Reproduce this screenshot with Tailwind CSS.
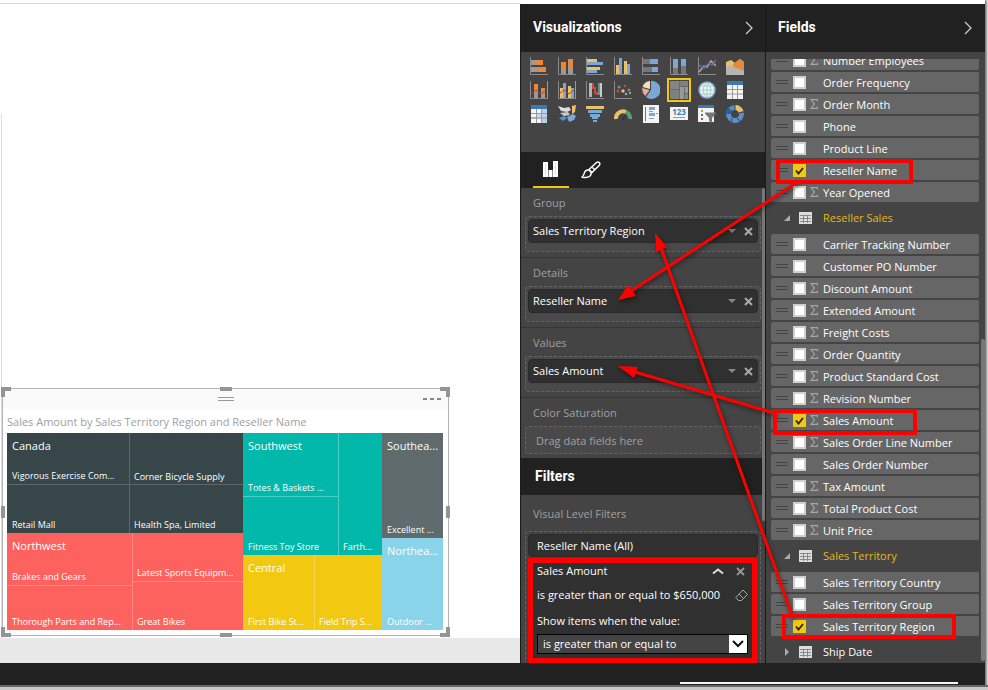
<!DOCTYPE html>
<html lang="en">
<head>
    <meta charset="UTF-8">
    <meta name="viewport" content="width=device-width, initial-scale=1.0">
    <title>Sales Report</title>
    <script src="https://cdn.jsdelivr.net/npm/@tailwindcss/browser@4"></script>
</head>
<body class="bg-white min-h-screen flex flex-col font-['Open_Sans','Noto_Sans',sans-serif] font-medium text-[11px] overflow-hidden">
    <div class="flex-1 flex flex-col mr-[3px] border-t-4 border-white shadow-[1px_1px_2px_1px_#777]">
        <main class="flex flex-1">
            <!-- Report canvas -->
            <section class="flex-1 min-w-0 flex flex-col border-t border-[#d8d8d8] bg-white -mt-px">
                <div class="flex-1 mt-[110px] border-l border-[#ddd] ml-px flex flex-col justify-end pb-[2px]">
                    <div class="relative w-[447px] border border-[#b4b4b4]">
                        <div class="h-5 bg-[#fafafa] flex items-center justify-center">
                            <span class="w-4 h-1 border-y border-[#999]"></span>
                            <button class="absolute right-[7px] top-2 flex gap-[3px] py-px" aria-label="More options">
                                <span class="w-1 h-[2px] bg-[#888]"></span><span class="w-1 h-[2px] bg-[#888]"></span><span class="w-1 h-[2px] bg-[#888]"></span>
                            </button>
                        </div>
                        <h2 class="h-6 px-1 leading-6 pt-px text-[#a0a0a0]">Sales Amount by Sales Territory Region and Reseller Name</h2>
                        <div class="ml-1 mr-[5px] mb-[5px] h-[197px] grid grid-cols-[236fr_139fr_61fr] text-white text-[9px] leading-[14px]">
                            <div class="grid grid-rows-[100fr_97fr] min-w-0">
                                <div class="grid grid-cols-[123fr_113fr] bg-[#374649]">
                                    <div class="grid grid-rows-[52fr_48fr] border-r border-[#5d686a] min-w-0">
                                        <div class="flex flex-col justify-between px-[5px] pt-[3px] pb-px border-b border-[#5d686a]"><h3 class="text-[11px] leading-5 truncate">Canada</h3><p class="truncate">Vigorous Exercise Com...</p></div>
                                        <div class="flex flex-col justify-end px-[5px] py-px"><p class="truncate">Retail Mall</p></div>
                                    </div>
                                    <div class="grid grid-rows-[52fr_48fr] min-w-0">
                                        <div class="flex flex-col justify-end px-1 border-b border-[#5d686a]"><p class="truncate">Corner Bicycle Supply</p></div>
                                        <div class="flex flex-col justify-end px-1 py-px"><p class="truncate">Health Spa, Limited</p></div>
                                    </div>
                                </div>
                                <div class="grid grid-cols-[126fr_110fr] bg-[#fd625e]">
                                    <div class="grid grid-rows-[53fr_44fr] border-r border-[#ff8683] min-w-0">
                                        <div class="flex flex-col justify-between px-[5px] pt-[3px] pb-px border-b border-[#ff8683]"><h3 class="text-[11px] leading-5 truncate">Northwest</h3><p class="truncate">Brakes and Gears</p></div>
                                        <div class="flex flex-col justify-end px-[5px] py-px"><p class="truncate">Thorough Parts and Rep...</p></div>
                                    </div>
                                    <div class="grid grid-rows-[49fr_48fr] min-w-0">
                                        <div class="flex flex-col justify-end px-1 py-px border-b border-[#ff8683]"><p class="truncate">Latest Sports Equipm...</p></div>
                                        <div class="flex flex-col justify-end px-1 py-px"><p class="truncate">Great Bikes</p></div>
                                    </div>
                                </div>
                            </div>
                            <div class="grid grid-rows-[122fr_75fr] min-w-0">
                                <div class="grid grid-cols-[96fr_43fr] bg-[#01b8aa]">
                                    <div class="grid grid-rows-[64fr_58fr] border-r border-[#4dcdc4] min-w-0">
                                        <div class="flex flex-col justify-between px-[5px] pt-[3px] pb-px border-b border-[#4dcdc4]"><h3 class="text-[11px] leading-5 truncate">Southwest</h3><p class="truncate">Totes &amp; Baskets ...</p></div>
                                        <div class="flex flex-col justify-end px-[5px] py-px"><p class="truncate">Fitness Toy Store</p></div>
                                    </div>
                                    <div class="flex flex-col justify-end px-1 py-px min-w-0"><p class="truncate">Farth...</p></div>
                                </div>
                                <div class="grid grid-cols-[72fr_67fr] bg-[#f2c811]">
                                    <div class="flex flex-col justify-between px-[5px] pt-[3px] pb-px border-r border-[#f5d550] min-w-0"><h3 class="text-[11px] leading-5 truncate">Central</h3><p class="whitespace-nowrap">First Bike St...</p></div>
                                    <div class="flex flex-col justify-end px-1 py-px min-w-0"><p class="whitespace-nowrap">Field Trip S...</p></div>
                                </div>
                            </div>
                            <div class="grid grid-rows-[105fr_92fr] min-w-0">
                                <div class="flex flex-col justify-between px-[5px] pt-[3px] pb-px bg-[#5f6b6d] min-w-0"><h3 class="text-[11px] leading-5 whitespace-nowrap">Southea...</h3><p class="whitespace-nowrap">Excellent ...</p></div>
                                <div class="flex flex-col justify-between px-[5px] pt-[3px] pb-px bg-[#8ad4eb] min-w-0"><h3 class="text-[11px] leading-5 whitespace-nowrap">Northea...</h3><p class="whitespace-nowrap">Outdoor ...</p></div>
                            </div>
                        </div>
                        <!-- Resize handles -->
                        <span class="absolute -left-[2px] -top-[2px] size-[10px] border-l-4 border-t-4 border-[#949494]"></span>
                        <span class="absolute -right-[2px] -top-[2px] size-[10px] border-r-4 border-t-4 border-[#949494]"></span>
                        <span class="absolute -left-[2px] -bottom-[2px] size-[10px] border-l-4 border-b-4 border-[#949494]"></span>
                        <span class="absolute -right-[2px] -bottom-[2px] size-[10px] border-r-4 border-b-4 border-[#949494]"></span>
                        <span class="absolute left-1/2 -ml-[6px] -top-[2px] w-3 h-1 bg-[#949494]"></span>
                        <span class="absolute left-1/2 -ml-[6px] -bottom-[2px] w-3 h-1 bg-[#949494]"></span>
                        <span class="absolute top-1/2 -mt-[6px] -left-[2px] w-1 h-3 bg-[#949494]"></span>
                        <span class="absolute top-1/2 -mt-[6px] -right-[2px] w-1 h-3 bg-[#949494]"></span>
                    </div>
                </div>
                <div class="h-[25px] bg-[#e8e8e8]"></div>
            </section>

            <div class="relative flex text-white">
                <!-- Visualizations -->
                <section class="relative w-[245px] bg-[#444] border-l border-[#1a1a1a]">
                    <header class="h-12 bg-[#212121] flex items-center justify-between pl-3 pr-[11px]">
                        <h2 class="font-['Roboto','Open_Sans',sans-serif] font-bold text-sm leading-5 pb-[2px]">Visualizations</h2>
                        <button aria-label="Collapse Visualizations"><svg class="w-[10px] h-[14px]" viewBox="0 0 10 14" fill="none" stroke="#ccc" stroke-width="1.3"><path d="M2 1l6 6-6 6"/></svg></button>
                    </header>
                    <div id="visuals" class="h-[100px] px-1 pt-[2px] grid grid-cols-[repeat(8,28px)] auto-rows-[24px] content-start"></div>
                    <nav class="h-9 bg-[#212121] flex pl-3 gap-1">
                        <button class="w-9 flex items-center justify-center border-b-2 border-[#f2c811]" aria-label="Fields"><svg class="size-4" viewBox="0 0 16 16" fill="#fff"><path d="M0 1h5v15H0zM5.500 9h4v7h-4zM10 0h5v16h-5z"/><path d="M2.500 3v11M12.500 2v12" stroke="#ddd"/></svg></button>
                        <button class="w-9 flex items-center justify-center" aria-label="Format"><svg class="w-5 h-[18px]" viewBox="0 0 20 18" fill="none" stroke="#fff" stroke-width="1.5" stroke-linejoin="round"><path d="M8 8.500L15.500 1.500q1.500-1 2.700 0t.2 2.700L11 11.500zM7.500 9q-3-.3-4 2.500-.5 3-2.500 4.500 5 1.500 8-1 2-2 .5-4.500zM8 9l3 2.500M11.500 6.500l2 2"/></svg></button>
                    </nav>
                    <div id="wells"></div>
                    <div class="px-1 pb-1">
                        <h3 class="h-7 leading-7 px-2 pt-px text-[#a0a0a0]">Color Saturation</h3>
                        <div class="h-7 leading-7 border border-dashed border-[#646464] rounded px-[10px] bg-[#494949] text-[#a0a0a0]">Drag data fields here</div>
                    </div>
                    <h2 class="h-[37px] leading-[37px] px-[14px] bg-[#212121] font-['Roboto','Open_Sans',sans-serif] font-bold text-sm">Filters</h2>
                    <h3 class="h-9 leading-9 pl-3 pt-px text-[#a0a0a0]">Visual Level Filters</h3>
                    <div class="ml-1 mr-1 border border-b-0 border-dashed border-[#646464] rounded-t px-[2px] pt-[2px]">
                        <div class="h-[23px] rounded bg-[#303030] border border-[#292929] leading-[22px] px-2 mb-px">Reseller Name (All)</div>
                        <div class="mr-px h-[105px] border-[5px] border-[#f00] bg-[#303030] px-1">
                            <div class="h-4 flex items-center">
                                <span class="flex-1">Sales Amount</span>
                                <button class="mr-3" aria-label="Collapse filter"><svg class="w-3 h-2" viewBox="0 0 12 8" fill="none" stroke="#ddd" stroke-width="2"><path d="M1 6.500l5-4 5 4"/></svg></button>
                                <button class="mr-[3px]" aria-label="Remove filter"><svg class="size-[9px]" viewBox="0 0 9 9" stroke="#999" stroke-width="1.8"><path d="M1 1l7 7M8 1L1 8"/></svg></button>
                            </div>
                            <div class="h-8 flex items-center justify-between">
                                <span class="whitespace-nowrap">is greater than or equal to $650,000</span>
                                <button aria-label="Clear filter"><svg class="size-[13px]" viewBox="0 0 13 13" fill="none" stroke="#aaa"><path d="M8 1l4.500 4.500-6 6h-3L.8 8.500zM4 5l4.500 4.500"/></svg></button>
                            </div>
                            <label for="condition" class="block h-[23px] leading-5">Show items when the value:</label>
                            <div class="relative">
                                <select id="condition" class="appearance-none w-full h-5 bg-[#444] border border-black pl-[5px] leading-4 font-medium text-[11px] text-white">
                                    <option>is greater than or equal to</option>
                                    <option>is less than</option>
                                </select>
                                <span class="pointer-events-none absolute right-px top-px w-[18px] h-[18px] bg-white flex items-center justify-center"><svg class="w-3 h-2" viewBox="0 0 12 8" fill="none" stroke="#111" stroke-width="2"><path d="M1 1l5 5 5-5"/></svg></span>
                            </div>
                        </div>
                    </div>
                    <span class="absolute right-0 top-[184px] w-[3px] h-[333px] bg-[#777] rounded"></span>
                </section>

                <!-- Fields -->
                <section class="relative w-[220px] bg-[#444] border-l border-[#1a1a1a] flex flex-col">
                    <header class="h-12 bg-[#212121] flex items-center justify-between pl-3 pr-3">
                        <h2 class="font-['Roboto','Open_Sans',sans-serif] font-bold text-sm leading-5 pb-[2px]">Fields</h2>
                        <button aria-label="Collapse Fields"><svg class="w-[10px] h-[14px]" viewBox="0 0 10 14" fill="none" stroke="#ccc" stroke-width="1.3"><path d="M2 1l6 6-6 6"/></svg></button>
                    </header>
                    <div class="mt-[7px] h-[604px] overflow-hidden pl-[5px] pr-[6px]">
                        <div id="fields" class="flex flex-col gap-[2px] -mt-[9px]"></div>
                    </div>
                    <span class="absolute right-0 top-[335px] w-1 bottom-[2px] bg-[#777] rounded"></span>
                </section>

                <!-- Callouts that lie over both panes -->
                <svg class="pointer-events-none absolute left-0 top-0 w-[465px] h-[659px]" viewBox="520 4 465 659">
                    <g class="drop-shadow-[1px_2px_2px_rgba(0,0,0,0.5)]">
                        <path d="M799 181L631 291M793 618L661 248M777 414L635 372" stroke="#f00" stroke-width="3"/>
                        <path d="M618 300l10-15 8 11zM655 233l12 14-11 5zM618 366l20 1-4 11z" fill="#f00"/>
                    </g>
                    <g fill="none" stroke="#f00" stroke-width="4">
                        <rect x="778" y="161" width="133" height="21"/>
                        <rect x="775" y="411" width="140" height="22"/>
                        <rect x="784" y="616" width="170" height="21"/>
                    </g>
                </svg>
            </div>
        </main>
        <footer class="h-[22px] bg-[#212121] flex justify-end items-end pb-px">
            <span class="w-[278px] h-[2px] bg-[#f4f4f4] mr-[27px]"></span>
        </footer>
    </div>
    <div class="h-[5px] border-t-2 border-[#666] bg-[#c8c8c8]"></div>

    <script>
        const O = "#e8883a", B = "#7ba7d7", Y = "#ecc068", G = "#9a9a9a", W = "#f4f4f4", D = "#3b78b8";
        const axis = '<path d="M.5 0v17.500H18" fill="none" stroke="#8a8a8a"/>';
        const r = (x, y, w, h, c) => `<rect x="${x}" y="${y}" width="${w}" height="${h}" fill="${c}"/>`;
        const table = r(1, 0, 16, 18, W) + r(1, 0, 16, 4, D) + '<path d="M1 8.500h16M1 13h16M6.500 4v14M11.500 4v14" stroke="#999"/>';

        const visuals = [
            ["Stacked bar chart", axis + r(1, 3, 4, 5, G) + r(5, 3, 8, 5, O) + r(1, 10, 7, 5, G) + r(8, 10, 8, 5, O)],
            ["Stacked column chart", axis + r(3, 5, 5, 8, O) + r(3, 13, 5, 4, G) + r(10, 2, 5, 9, O) + r(10, 11, 5, 6, G)],
            ["Clustered bar chart", axis + r(1, 2, 10, 3, Y) + r(1, 5, 16, 3, B) + r(1, 10, 13, 3, Y) + r(1, 13, 10, 3, B)],
            ["Clustered column chart", axis + r(2, 8, 3, 9, Y) + r(5, 1, 3, 16, B) + r(10, 4, 3, 13, Y) + r(13, 7, 3, 10, B)],
            ["100% stacked bar chart", axis + r(1, 2, 7, 5, "#777") + r(8, 2, 8, 5, B) + r(1, 10, 9, 5, "#777") + r(10, 10, 6, 5, B)],
            ["100% stacked column chart", axis + r(3, 2, 5, 9, B) + r(3, 11, 5, 6, "#777") + r(11, 2, 5, 7, B) + r(11, 9, 5, 8, "#777")],
            ["Line chart", axis + '<path d="M1 15l5-6 3 1 4-6 5 5" fill="none" stroke="#d99a90" stroke-width="1.500"/><path d="M1 8l5 3 5-5 3 2 4-5" fill="none" stroke="#4a76ad" stroke-width="1.500"/>'],
            ["Area chart", '<path d="M0 5l5-2 4 3 5-4 4 3v12H0z" fill="#ecc068"/><path d="M7 7l7-5 4 3v12H7z" fill="#e8883a"/><path d="M0 10l5-2 5 3 4 1 4 2v4H0z" fill="#b5b5b0"/>'],
            ["Line and stacked column chart", axis + r(4, 3, 4, 8, O) + r(4, 11, 4, 6, G) + r(11, 7, 4, 5, O) + r(11, 12, 4, 5, G) + '<path d="M1 13l5-4 5 4 6-5" fill="none" stroke="#c0392b"/><path d="M17.500 0v17" stroke="#e8883a"/>'],
            ["Line and clustered column chart", axis + r(2, 7, 3, 10, Y) + r(5, 2, 3, 15, B) + r(10, 5, 3, 12, Y) + r(13, 7, 3, 10, B) + '<path d="M1 13l5-4 5 4 6-5" fill="none" stroke="#c0392b"/><path d="M17.500 0v17" stroke="#e8883a"/>'],
            ["Waterfall chart", axis + r(3, 2, 3, 14, "#b5b5b5") + r(6, 2, 2, 6, "#d0483e") + r(8, 6, 2, 7, "#d0483e") + r(10, 11, 2, 3, "#d0483e") + r(12, 2, 2, 12, "#5a9a80") + r(14, 2, 2, 14, "#ccc")],
            ["Scatter chart", axis + '<circle cx="5" cy="6" r="1.500" fill="#5b8fca"/><circle cx="11" cy="5" r="1.200" fill="#d0483e"/><circle cx="4" cy="10" r="1.500" fill="#d0483e"/><circle cx="9" cy="10" r="1.700" fill="#ecc068"/><circle cx="15" cy="9" r="1.500" fill="#5a9a80"/><circle cx="12" cy="13" r="1.300" fill="#7ba7d7"/><circle cx="16" cy="12" r="1" fill="#ecc068"/>'],
            ["Pie chart", '<path d="M9 9V0a9 9 0 1 1-5 16z" fill="#7ba7d7"/><path d="M8 8V0a9 9 0 0 0-7.500 6z" fill="#f3dfb2"/><path d="M7.500 9L.3 7a9 9 0 0 0 3 8z" fill="#e9a99c"/>'],
            ["Treemap", r(0, 0, 18, 18, "#6a6a6a") + r(0, 0, 9, 8, "#858585") + r(10, 0, 8, 5, "#808080") + r(0, 9, 9, 9, "#808080") + r(10, 6, 4, 12, "#999") + r(15, 6, 3, 6, "#999") + r(15, 13, 3, 5, "#888")],
            ["Map", '<circle cx="9" cy="9" r="8" fill="#eef6f8" stroke="#7ba7d7" stroke-width="1.500"/><path d="M1 9h16M9 1v16M2.500 5h13M2.500 13h13M9 1q-8 8 0 16M9 1q8 8 0 16" fill="none" stroke="#8cc2b4" stroke-width=".7"/>'],
            ["Table", table],
            ["Matrix", table + r(7, 9, 4, 4, "#c9dcef") + r(12, 4, 5, 14, "#b9d0e8") + '<path d="M1 8.500h16M1 13h16" stroke="#999"/>'],
            ["Filled map", '<path d="M0 1l6 2 5-1 2 3-4 2-6-1z" fill="#ddd"/><path d="M14 1l4-1-1 7-3 2z" fill="#ecc068"/><path d="M2 8l8-1 2 3-6 1z" fill="#ccc"/><path d="M1 13l5-2 3 2-4 3z" fill="#5b8fca"/><path d="M9 12l6-3 3 2-2 4-5 2z" fill="#7ba7d7"/>'],
            ["Funnel", r(0, 1, 18, 3, Y) + r(2, 5, 14, 3, B) + r(4, 9, 10, 3, B) + r(6, 12, 6, 2, B) + r(7, 15, 4, 2, B)],
            ["Gauge", '<g fill="none" stroke-width="4"><path d="M2 14a7 7 0 0 1 10-7" stroke="#ecc068"/><path d="M12 7a7 7 0 0 1 4 7" stroke="#5a9a80"/></g><path d="M8 14l4-5-2 6z" fill="#333"/>'],
            ["Multi-row card", r(1, 0, 16, 18, W) + r(3, 2, 1, 14, "#777") + r(7, 2, 6, 3, B) + r(7, 8, 6, 3, B) + r(7, 6, 4, 1, G) + r(7, 13, 5, 1, G) + r(14, 8, 2, 1, G)],
            ["Card", r(0, 2, 18, 13, W) + '<text x="9" y="10" text-anchor="middle" font-size="8" font-weight="bold" fill="#3b78b8">123</text>' + r(3, 12, 12, 1, G)],
            ["Slicer", r(0, 0, 16, 17, W) + r(0, 0, 16, 3, D) + r(3, 5, 2, 2, O) + r(3, 9, 2, 2, D) + r(3, 13, 2, 2, "#d0483e") + '<path d="M7 7.500h11v1L14 13v5l-3-2v-3L7 8.500z" fill="#777"/>'],
            ["Donut chart", '<g fill="none" stroke-width="5"><circle cx="9" cy="9" r="6.500" stroke="#5b8fca"/><path d="M9 2.500a6.500 6.500 0 0 1 6 4" stroke="#ecc068"/><path d="M2.500 9a6.500 6.500 0 0 1 2-4.500" stroke="#285f9c"/></g><path d="M9 0v5M18 7l-5 1M5 17l1-4M14 16l-3-3" stroke="#444"/>'],
        ];
        document.getElementById("visuals").innerHTML = visuals.map(([name, art]) => `
            <button class="flex items-center justify-center" aria-label="${name}">
                <span class="${name === "Treemap" ? "p-px border-2 border-[#f2c811]" : ""}"><svg class="size-[18px]" viewBox="0 0 18 18">${art}</svg></span>
            </button>`).join("");

        const wells = [["Group", "Sales Territory Region"], ["Details", "Reseller Name"], ["Values", "Sales Amount"]];
        document.getElementById("wells").innerHTML = wells.map(([label, field]) => `
            <div class="h-[70px] px-1 border-b border-[#363636]">
                <h3 class="h-7 leading-7 px-2 pt-px text-[#a0a0a0]">${label}</h3>
                <div class="h-9 border border-dashed border-[#646464] rounded bg-[#494949] p-[2px]">
                    <div class="h-6 flex items-center bg-[#303030] border border-[#292929] rounded pl-1 pr-1">
                        <span class="flex-1">${field}</span>
                        <button class="mr-2" aria-label="${field} options"><svg class="w-2 h-1" viewBox="0 0 8 4" fill="#888"><path d="M0 0h8L4 4z"/></svg></button>
                        <button aria-label="Remove ${field}"><svg class="size-[9px]" viewBox="0 0 9 9" stroke="#aaa" stroke-width="2"><path d="M1 1l7 7M8 1L1 8"/></svg></button>
                    </div>
                </div>
            </div>`).join("");

        // [name, kind]: s = summed field, t = open table, c = closed table
        const fields = [
            ["Number Employees", "s"], ["Order Frequency", ""], ["Order Month", "s"], ["Phone", ""], ["Product Line", ""],
            ["Reseller Name", ""], ["Year Opened", "s"],
            ["Reseller Sales", "t"],
            ["Carrier Tracking Number", ""], ["Customer PO Number", ""], ["Discount Amount", "s"], ["Extended Amount", "s"],
            ["Freight Costs", "s"], ["Order Quantity", "s"], ["Product Standard Cost", "s"], ["Revision Number", "s"],
            ["Sales Amount", "s"], ["Sales Order Line Number", "s"], ["Sales Order Number", ""], ["Tax Amount", "s"],
            ["Total Product Cost", "s"], ["Unit Price", "s"],
            ["Sales Territory", "t"],
            ["Sales Territory Country", ""], ["Sales Territory Group", ""], ["Sales Territory Region", ""],
            ["Ship Date", "c"],
        ];
        const used = ["Reseller Name", "Sales Amount", "Sales Territory Region"];
        document.getElementById("fields").innerHTML = fields.map(([name, kind], i) => {
            if (kind === "t" || kind === "c") {
                return `
                <button class="h-7 shrink-0 flex items-center text-left pl-3 ${kind === "t" ? "text-[#e3b81c]" : "text-white"}">
                    <svg class="size-2 mr-2" viewBox="0 0 8 8" fill="#aaa"><path d="${kind === "t" ? "M7 1v6H1z" : "M2 0l4 4-4 4z"}"/></svg>
                    <svg class="w-[13px] h-3 mr-[11px]" viewBox="0 0 13 12"><path fill="#ddd" d="M0 0h13v12H0z"/><path d="M1 3.500h11M1 6.500h11M1 9.500h11M4.500 3v8M8.500 3v8" stroke="#777" stroke-width=".8"/></svg>
                    <span class="pt-px">${name}</span>
                </button>`;
            }
            return `
                <div class="h-5 shrink-0 flex items-center rounded-[2px] bg-[#666] pl-[5px]">
                    <span class="w-3 h-1 border-y border-[#444] mr-[5px]"></span>
                    <span class="relative size-[13px]">
                        <input id="field${i}" type="checkbox" class="peer block appearance-none size-[13px] bg-white border-2 border-[#d0d0d0] checked:bg-[#f2c811] checked:border-[#f2c811]" ${used.includes(name) ? "checked" : ""}>
                        <svg class="hidden peer-checked:block pointer-events-none absolute left-0 top-0 size-[13px]" viewBox="0 0 13 13" fill="none" stroke="#222" stroke-width="1.800"><path d="M3 6.500l2.500 3L10 4"/></svg>
                    </span>
                    <span class="w-[17px] flex justify-center pr-px">${kind === "s" ? '<svg class="w-2 h-[10px]" viewBox="0 0 8 10" fill="none" stroke="#a5a5a5" stroke-width="1.200"><path d="M7.500 2.500V.6H1L4.500 5 1 9.400h6.500V7.500"/></svg>' : ""}</span>
                    <label for="field${i}" class="whitespace-nowrap leading-5 pt-px">${name}</label>
                </div>`;
        }).join("");
    </script>
</body>
</html>
